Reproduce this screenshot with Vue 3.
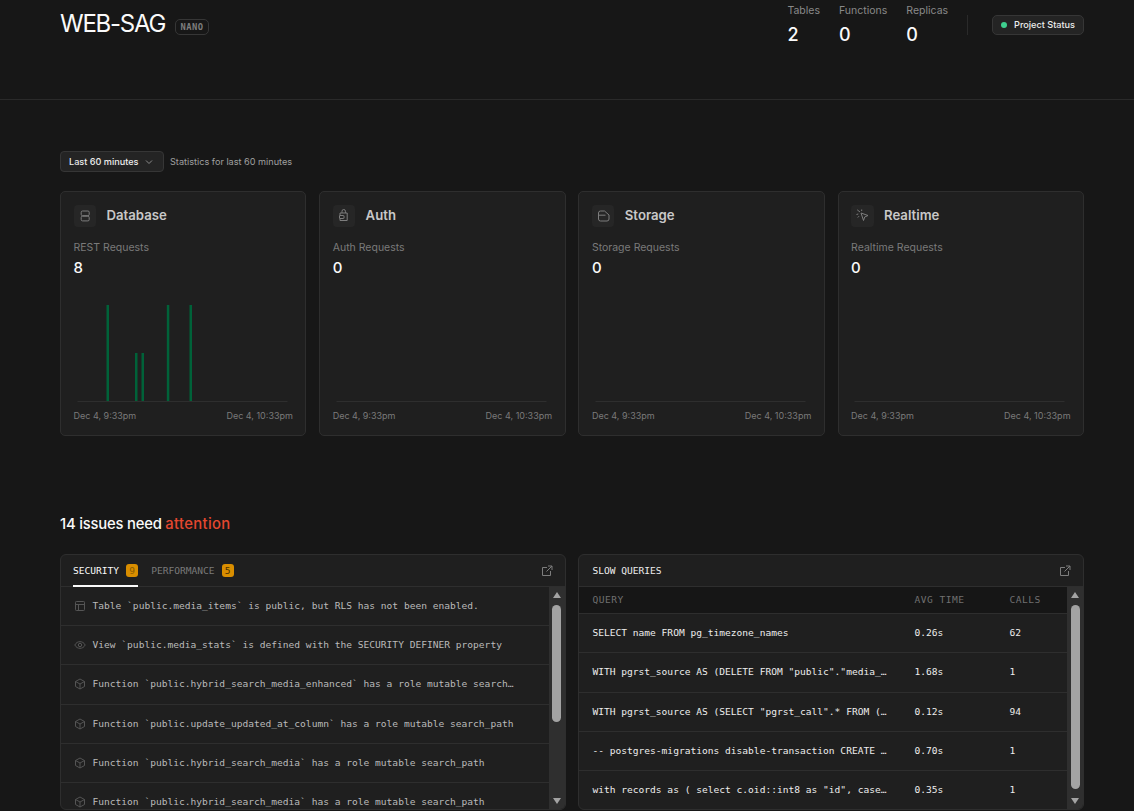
<script setup>
const stats = [
  { label: 'Tables', value: 2 },
  { label: 'Functions', value: 0 },
  { label: 'Replicas', value: 0 },
]
const cards = [
  { title: 'Database', label: 'REST Requests', value: 8, icon: 'db', bars: [
    { x: 32.5, h: 96 }, { x: 61, h: 48 }, { x: 67.5, h: 48 }, { x: 92.8, h: 96 }, { x: 115.5, h: 96 },
  ] },
  { title: 'Auth', label: 'Auth Requests', value: 0, icon: 'auth', bars: [] },
  { title: 'Storage', label: 'Storage Requests', value: 0, icon: 'storage', bars: [] },
  { title: 'Realtime', label: 'Realtime Requests', value: 0, icon: 'realtime', bars: [] },
]
const issues = [
  { icon: 'table', text: 'Table `public.media_items` is public, but RLS has not been enabled.' },
  { icon: 'eye', text: 'View `public.media_stats` is defined with the SECURITY DEFINER property' },
  { icon: 'cube', text: 'Function `public.hybrid_search_media_enhanced` has a role mutable search…' },
  { icon: 'cube', text: 'Function `public.update_updated_at_column` has a role mutable search_path' },
  { icon: 'cube', text: 'Function `public.hybrid_search_media` has a role mutable search_path' },
  { icon: 'cube', text: 'Function `public.hybrid_search_media` has a role mutable search_path' },
]
const queries = [
  { q: 'SELECT name FROM pg_timezone_names', t: '0.26s', c: 62 },
  { q: 'WITH pgrst_source AS (DELETE FROM "public"."media_…', t: '1.68s', c: 1 },
  { q: 'WITH pgrst_source AS (SELECT "pgrst_call".* FROM (…', t: '0.12s', c: 94 },
  { q: '-- postgres-migrations disable-transaction CREATE …', t: '0.70s', c: 1 },
  { q: 'with records as ( select c.oid::int8 as "id", case…', t: '0.35s', c: 1 },
]
</script>

<template>
  <div class="page">
    <header class="top">
      <div class="brand">
        <h1>WEB-SAG</h1>
        <span class="nano">NANO</span>
      </div>
      <div class="top-right">
        <div class="stats">
          <div v-for="s in stats" :key="s.label" class="stat">
            <span class="stat-label">{{ s.label }}</span>
            <span class="stat-value">{{ s.value }}</span>
          </div>
        </div>
        <span class="vline"></span>
        <button class="status"><i class="dot"></i>Project Status</button>
      </div>
    </header>

    <main class="main">
      <div class="toolbar">
        <button class="range">
          Last 60 minutes
          <svg width="10" height="10" viewBox="0 0 10 10" fill="none" stroke="#8a8a8a" stroke-width="1"><path d="M2 3.5 5 6.5 8 3.5"/></svg>
        </button>
        <span class="range-note">Statistics for last 60 minutes</span>
      </div>

      <section class="cards">
        <article v-for="c in cards" :key="c.title" class="card">
          <div class="card-head">
            <span class="tile">
              <svg width="14" height="14" viewBox="0 0 14 14" fill="none" stroke="#7d7d7d" stroke-width="1">
                <template v-if="c.icon === 'db'">
                  <rect x="3.200" y="2" width="8" height="4.700" rx="1.300"/>
                  <rect x="3.200" y="7.200" width="8" height="4.700" rx="1.300"/>
                </template>
                <template v-else-if="c.icon === 'auth'">
                  <path d="M5 4V2.200a1.700 1.700 0 0 1 3.400 0V4"/>
                  <path d="M3 4h7.200v7.500H3z"/>
                  <rect x="2.500" y="6.500" width="4.500" height="3" rx=".5" fill="#262626"/>
                </template>
                <template v-else-if="c.icon === 'storage'">
                  <path d="M4.500 2H8.500L13 6v4a2 2 0 0 1-2 2H4.500a2 2 0 0 1-2-2V4a2 2 0 0 1 2-2z"/>
                  <path d="M2.500 6.200H9.500"/>
                </template>
                <template v-else>
                  <path d="M6 4 13 6.500 9.700 8 8.500 11.500z"/>
                  <path d="M5 3 2.200.8M6.700 2V.5M3.300 5 1.500 5.500M4 7.200 2.800 8.500"/>
                </template>
              </svg>
            </span>
            <h2>{{ c.title }}</h2>
          </div>
          <div class="metric-label">{{ c.label }}</div>
          <div class="metric-value">{{ c.value }}</div>
          <svg class="chart" width="219" height="98" viewBox="0 0 219 98">
            <rect v-for="b in c.bars" :key="b.x" :x="b.x" :y="96 - b.h" width="2.500" :height="b.h" fill="#006239"/>
            <line x1="3.500" y1="96.500" x2="213.500" y2="96.500" stroke="#2e2e2e"/>
          </svg>
          <div class="dates"><span>Dec 4, 9:33pm</span><span>Dec 4, 10:33pm</span></div>
        </article>
      </section>

      <h3 class="issues">14 issues need <em>attention</em></h3>

      <section class="panels">
        <div class="panel">
          <div class="panel-head">
            <div class="tabs">
              <span class="tab active">SECURITY <b class="dim">9</b></span>
              <span class="tab">PERFORMANCE <b>5</b></span>
            </div>
            <svg class="ext" width="12" height="12" viewBox="0 0 12 12" fill="none" stroke="#7d7d7d" stroke-width="1"><path d="M6 2.500H1.500v8h8V6M7 1h4v4M11 1 5.500 6.500"/></svg>
          </div>
          <div class="panel-body">
            <div class="list">
              <div v-for="(r, i) in issues" :key="i" class="row">
                <svg width="12" height="12" viewBox="0 0 12 12" fill="none" stroke="#555" stroke-width="1">
                  <template v-if="r.icon === 'table'">
                    <rect x="1.500" y="1.500" width="9" height="9" rx=".8"/>
                    <path d="M1.500 4.500h9M4.500 4.500v6"/>
                  </template>
                  <template v-else-if="r.icon === 'eye'">
                    <path d="M.8 6C2.200 3.500 3.900 2.700 6 2.700S9.800 3.500 11.200 6C9.800 8.500 8.100 9.300 6 9.300S2.200 8.500.8 6z"/>
                    <circle cx="6" cy="6" r="1.700"/>
                  </template>
                  <template v-else>
                    <path d="M6 1 10.500 3.500v5L6 11 1.500 8.500v-5z"/>
                    <path d="M1.500 3.500 6 6l4.500-2.500M6 6v5"/>
                  </template>
                </svg>
                <span class="row-text">{{ r.text }}</span>
              </div>
            </div>
            <div class="scrollbar">
              <i class="arrow up"></i>
              <i class="thumb thumb-left"></i>
              <i class="arrow down"></i>
            </div>
          </div>
        </div>

        <div class="panel">
          <div class="panel-head">
            <span class="panel-title">SLOW QUERIES</span>
            <svg class="ext" width="12" height="12" viewBox="0 0 12 12" fill="none" stroke="#7d7d7d" stroke-width="1"><path d="M6 2.500H1.500v8h8V6M7 1h4v4M11 1 5.500 6.500"/></svg>
          </div>
          <div class="panel-body">
            <div class="list">
              <div class="qrow qhead"><span>QUERY</span><span>AVG TIME</span><span>CALLS</span></div>
              <div v-for="(r, i) in queries" :key="i" class="qrow">
                <span class="q">{{ r.q }}</span><span>{{ r.t }}</span><span>{{ r.c }}</span>
              </div>
            </div>
            <div class="scrollbar">
              <i class="arrow up"></i>
              <i class="thumb thumb-right"></i>
              <i class="arrow down"></i>
            </div>
          </div>
        </div>
      </section>
    </main>
  </div>
</template>

<style>
html, body { margin: 0; background: #171717; overflow: hidden; height: 811px; }
</style>

<style scoped>
.page { width: 1134px; height: 811px; overflow: hidden; background: #171717; color: #fafafa; font-family: Inter, "Liberation Sans", sans-serif; }
.top { box-sizing: border-box; height: 100px; border-bottom: 1px solid #2a2a2a; padding: 0 50px 0 60px; display: flex; justify-content: space-between; align-items: flex-start; }
.brand { display: flex; align-items: center; gap: 10px; margin-top: 9px; }
h1 { margin: 0; font-size: 24px; line-height: 29px; font-weight: 400; letter-spacing: -1.250px; }
.nano { font-family: "DejaVu Sans Mono", monospace; font-size: 8.800px; line-height: 14px; letter-spacing: .4px; font-weight: 700; color: #7d7d7d; border: 1px solid #363636; border-radius: 5px; padding: 0 4.500px; margin-top: 7px; }
.top-right { display: flex; align-items: center; margin-top: 3px; }
.stats { display: flex; gap: 19px; }
.stat { display: flex; flex-direction: column; }
.stat-label { font-size: 10.500px; line-height: 16px; color: #898989; }
.stat-value { font-size: 18px; line-height: 23px; margin-top: 4px; font-weight: 500; }
.vline { width: 1px; height: 20px; background: #2a2a2a; margin: 0 24px 0 19px; }
.status { display: flex; align-items: center; gap: 7px; height: 20px; padding: 0 8px; background: #242424; border: 1px solid #363636; border-radius: 5px; color: #ededed; font: 500 9.150px Inter, sans-serif; }
.dot { width: 6px; height: 6px; border-radius: 50%; background: #3ecf8e; }
.main { padding: 51px 50px 0 60px; }
.toolbar { display: flex; align-items: center; gap: 6px; height: 21px; margin-bottom: 19px; }
.range { box-sizing: border-box; width: 104px; height: 21px; display: flex; align-items: center; justify-content: space-between; padding: 0 9px 0 8px; background: #242424; border: 1px solid #363636; border-radius: 4px; color: #ededed; font: 500 9.150px Inter, sans-serif; }
.range-note { font-size: 9.150px; color: #a0a0a0; }
.cards { display: flex; gap: 12.800px; }
.card { box-sizing: border-box; flex: 1 1 0; min-width: 0; height: 245px; padding: 13px 12.500px 0; background: #1f1f1f; border: 1px solid #2e2e2e; border-radius: 5px; }
.card-head { display: flex; align-items: center; gap: 10.500px; }
.tile { width: 22.400px; height: 22px; border-radius: 4px; background: #262626; display: flex; align-items: center; justify-content: center; }
h2 { margin: 0 0 2px; font-size: 13.200px; font-weight: 600; color: #c8c8c8; }
.metric-label { margin-top: 13px; font-size: 10.500px; line-height: 16px; color: #7a7a7a; }
.metric-value { font-size: 15px; line-height: 20px; margin-top: 2px; font-weight: 500; }
.chart { display: block; margin-top: 27px; }
.dates { display: flex; justify-content: space-between; margin-top: 6px; font-size: 9px; line-height: 14px; color: #7a7a7a; }
.issues { margin: 78px 0 20px; font-size: 14.800px; line-height: 20px; font-weight: 500; letter-spacing: -.2px; }
.issues em { font-style: normal; color: #e5482f; letter-spacing: .35px; }
.panels { display: flex; gap: 12.800px; }
.panel { box-sizing: border-box; flex: 1 1 0; min-width: 0; height: 256px; background: #1f1f1f; border: 1px solid #2e2e2e; border-radius: 6px; overflow: hidden; font-family: "DejaVu Sans Mono", monospace; font-size: 9.580px; line-height: 16px; }
.panel-head { box-sizing: border-box; height: 32px; display: flex; justify-content: space-between; align-items: center; padding: 0 12px; border-bottom: 1px solid #2e2e2e; }
.tabs { display: flex; gap: 13px; height: 32px; }
.tab { display: flex; align-items: center; gap: 7px; color: #7a7a7a; }
.tab.active { color: #fafafa; box-shadow: inset 0 -2px 0 #fafafa; }
.tab b { width: 12px; height: 13px; border-radius: 3px; background: #d98e00; color: #4a3000; font-weight: 400; display: flex; align-items: center; justify-content: center; }
.tab b.dim { color: #8a5c00; }
.panel-title { color: #ededed; margin-left: 1px; }
.panel-body { display: flex; height: 222px; }
.list { flex: 1 1 0; min-width: 0; overflow: hidden; }
.row { box-sizing: border-box; height: 39.200px; display: flex; align-items: center; gap: 7px; padding-left: 12.500px; border-bottom: 1px solid #2e2e2e; color: #bababa; }
.row svg { flex: none; }
.row-text { white-space: nowrap; }
.qrow { box-sizing: border-box; height: 39.300px; display: grid; grid-template-columns: 322px 95px 1fr; align-items: center; padding-left: 13px; border-bottom: 1px solid #2e2e2e; color: #ededed; }
.qhead { height: 27px; background: #161616; color: #707070; letter-spacing: .5px; }
.q { white-space: nowrap; }
.scrollbar { flex: none; width: 16px; background: #2f2f2f; display: flex; flex-direction: column; align-items: center; }
.arrow { width: 0; height: 0; border-left: 4.500px solid transparent; border-right: 4.500px solid transparent; }
.arrow.up { border-bottom: 6px solid #a3a3a3; margin-top: 5px; }
.arrow.down { border-top: 6px solid #a3a3a3; margin-top: auto; margin-bottom: 5px; }
.thumb { width: 9px; background: #a3a3a3; border-radius: 4.500px; margin-top: 7px; }
.thumb-left { height: 117px; }
.thumb-right { height: 184px; }
</style>
